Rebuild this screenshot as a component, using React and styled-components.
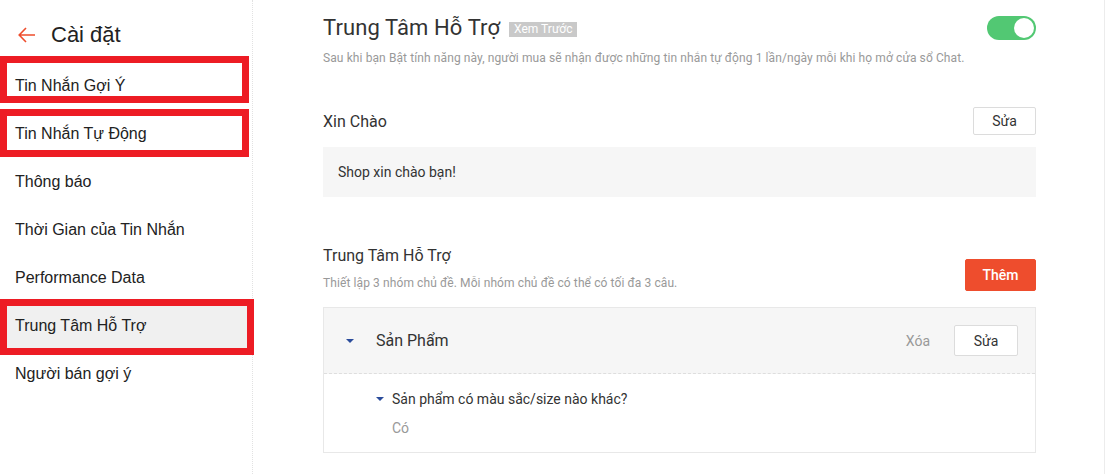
import React from "react";
import styled, { createGlobalStyle } from "styled-components";

const Global = createGlobalStyle`
  html, body { margin: 0; padding: 0; background: #fff; }
  #root { width: 1107px; height: 474px; overflow: hidden; }
  * { box-sizing: border-box; }
`;

const Page = styled.div`
  display: flex;
  width: 1107px;
  height: 474px;
  font-family: Roboto, "Liberation Sans", Arial, sans-serif;
  color: #333;
`;

const Sidebar = styled.aside`
  position: relative;
  z-index: 2;
  width: 253px;
  flex: none;
  border-right: 1px dotted #e2e2e2;
  font-family: "Liberation Sans", Arial, sans-serif;
`;

const SideHeader = styled.div`
  display: flex;
  align-items: center;
  gap: 15px;
  height: 62px;
  padding: 20px 0 12px 18px;
  font-size: 22px;
  line-height: 30px;
  color: #222;
`;

const NavItem = styled.div`
  position: relative;
  display: flex;
  align-items: center;
  height: 48px;
  padding-left: 15px;
  font-size: 16px;
  color: #222;
  background: ${(p) => (p.$active ? "#f0f0f0" : "transparent")};
`;

const Mark = styled.span`
  position: absolute;
  left: 0;
  top: ${(p) => p.$t}px;
  bottom: ${(p) => p.$b}px;
  right: ${(p) => p.$r}px;
  border: 7px solid #ed1c24;
  pointer-events: none;
`;

const Main = styled.main`
  width: 852px;
  flex: none;
  padding: 14px 68px 0 70px;
  border-right: 1px solid #ececec;
`;

const TitleRow = styled.div`
  display: flex;
  align-items: center;
  justify-content: space-between;
  height: 28px;
`;

const TitleGroup = styled.div`
  display: flex;
  align-items: center;
  gap: 9px;
`;

const Title = styled.h1`
  margin: 0;
  font-size: 22px;
  font-weight: 400;
  line-height: 28px;
  color: #333;
  letter-spacing: 0.1px;
`;

const Badge = styled.span`
  display: inline-block;
  background: #c9c9c9;
  color: #fff;
  font-size: 12px;
  line-height: 15px;
  padding: 0 5px;
  margin-top: 2px;
`;

const Toggle = styled.div`
  position: relative;
  width: 49px;
  height: 24px;
  border-radius: 12px;
  background: #52c873;
  &::after {
    content: "";
    position: absolute;
    right: 2px;
    top: 2px;
    width: 20px;
    height: 20px;
    border-radius: 50%;
    background: #fff;
  }
`;

const Hint = styled.p`
  margin: ${(p) => p.$mt || 0}px 0 0;
  font-size: 12px;
  line-height: 16px;
  letter-spacing: 0.1px;
  color: #999;
`;

const SectionRow = styled.div`
  display: flex;
  justify-content: space-between;
  align-items: ${(p) => p.$align || "center"};
  margin-top: ${(p) => p.$mt}px;
`;

const SectionTitle = styled.h2`
  margin: 0;
  padding-top: ${(p) => p.$pt || 0}px;
  font-size: 16px;
  font-weight: 400;
  line-height: 20px;
  color: #333;
`;

const Button = styled.button`
  font-family: Roboto, "Liberation Sans", Arial, sans-serif;
  font-size: 14px;
  width: ${(p) => p.$w}px;
  height: ${(p) => p.$h}px;
  border-radius: 2px;
  cursor: pointer;
  padding: 0;
  ${(p) =>
    p.$primary
      ? `background: #ee4d2d; color: #fff; border: 1px solid #ee4d2d; font-weight: 500;`
      : `background: #fff; color: #333; border: 1px solid #dcdcdc;`}
`;

const GreetBox = styled.div`
  margin-top: 12px;
  height: 50px;
  background: #f6f6f6;
  display: flex;
  align-items: center;
  padding-left: 15px;
  font-size: 14px;
  color: #333;
`;

const Card = styled.div`
  margin-top: 16px;
  border: 1px solid #e8e8e8;
`;

const CardHead = styled.div`
  display: flex;
  align-items: center;
  height: 66px;
  padding: 0 17px 0 22px;
  background: #f6f6f6;
  border-bottom: 1px dashed #dedede;
`;

const Caret = styled.span`
  width: 0;
  height: 0;
  border-left: 4px solid transparent;
  border-right: 4px solid transparent;
  border-top: 4px solid #2b4c9b;
  margin-right: ${(p) => p.$gap}px;
`;

const GroupName = styled.span`
  font-size: 16px;
  color: #333;
  flex: 1;
`;

const DeleteLink = styled.span`
  font-size: 14px;
  color: #999;
  margin-right: 24px;
`;

const CardBody = styled.div`
  padding: 15px 0 14px 52px;
`;

const Question = styled.div`
  display: flex;
  align-items: center;
  font-size: 14px;
  line-height: 20px;
  color: #333;
`;

const Answer = styled.div`
  margin-top: 9px;
  padding-left: 16px;
  font-size: 14px;
  line-height: 20px;
  color: #999;
`;

const BackArrow = () => (
  <svg width="18" height="16" viewBox="0 0 18 16" fill="none" stroke="#ee4d2d" strokeWidth="1.6">
    <path d="M17 8H1.5M8 1L1.2 8L8 15" />
  </svg>
);

const nav = [
  { label: "Tin Nhắn Gợi Ý", mark: { t: -6, b: 7, r: 3 } },
  { label: "Tin Nhắn Tự Động", mark: { t: -1, b: 1, r: 3 } },
  { label: "Thông báo" },
  { label: "Thời Gian của Tin Nhắn" },
  { label: "Performance Data" },
  { label: "Trung Tâm Hỗ Trợ", active: true, mark: { t: -3, b: -5, r: -2 } },
  { label: "Người bán gợi ý" },
];

export default function App() {
  return (
    <>
      <Global />
      <Page>
        <Sidebar>
          <SideHeader>
            <BackArrow />
            <span>Cài đặt</span>
          </SideHeader>
          {nav.map((n) => (
            <NavItem key={n.label} $active={n.active}>
              {n.label}
              {n.mark && <Mark $t={n.mark.t} $b={n.mark.b} $r={n.mark.r} />}
            </NavItem>
          ))}
        </Sidebar>
        <Main>
          <TitleRow>
            <TitleGroup>
              <Title>Trung Tâm Hỗ Trợ</Title>
              <Badge>Xem Trước</Badge>
            </TitleGroup>
            <Toggle />
          </TitleRow>
          <Hint $mt={8}>
            Sau khi bạn Bật tính năng này, người mua sẽ nhận được những tin nhắn tự động 1 lần/ngày mỗi khi họ mở cửa sổ Chat.
          </Hint>

          <SectionRow $mt={41}>
            <SectionTitle $pt={2}>Xin Chào</SectionTitle>
            <Button $w={63} $h={28}>Sửa</Button>
          </SectionRow>
          <GreetBox>Shop xin chào bạn!</GreetBox>

          <SectionRow $mt={47} $align="flex-end">
            <div>
              <SectionTitle $pt={2}>Trung Tâm Hỗ Trợ</SectionTitle>
              <Hint $mt={9}>Thiết lập 3 nhóm chủ đề. Mỗi nhóm chủ đề có thể có tối đa 3 câu.</Hint>
            </div>
            <Button $primary $w={71} $h={32}>Thêm</Button>
          </SectionRow>

          <Card>
            <CardHead>
              <Caret $gap={22} />
              <GroupName>Sản Phẩm</GroupName>
              <DeleteLink>Xóa</DeleteLink>
              <Button $w={64} $h={31}>Sửa</Button>
            </CardHead>
            <CardBody>
              <Question>
                <Caret $gap={8} />
                Sản phẩm có màu sắc/size nào khác?
              </Question>
              <Answer>Có</Answer>
            </CardBody>
          </Card>
        </Main>
      </Page>
    </>
  );
}
